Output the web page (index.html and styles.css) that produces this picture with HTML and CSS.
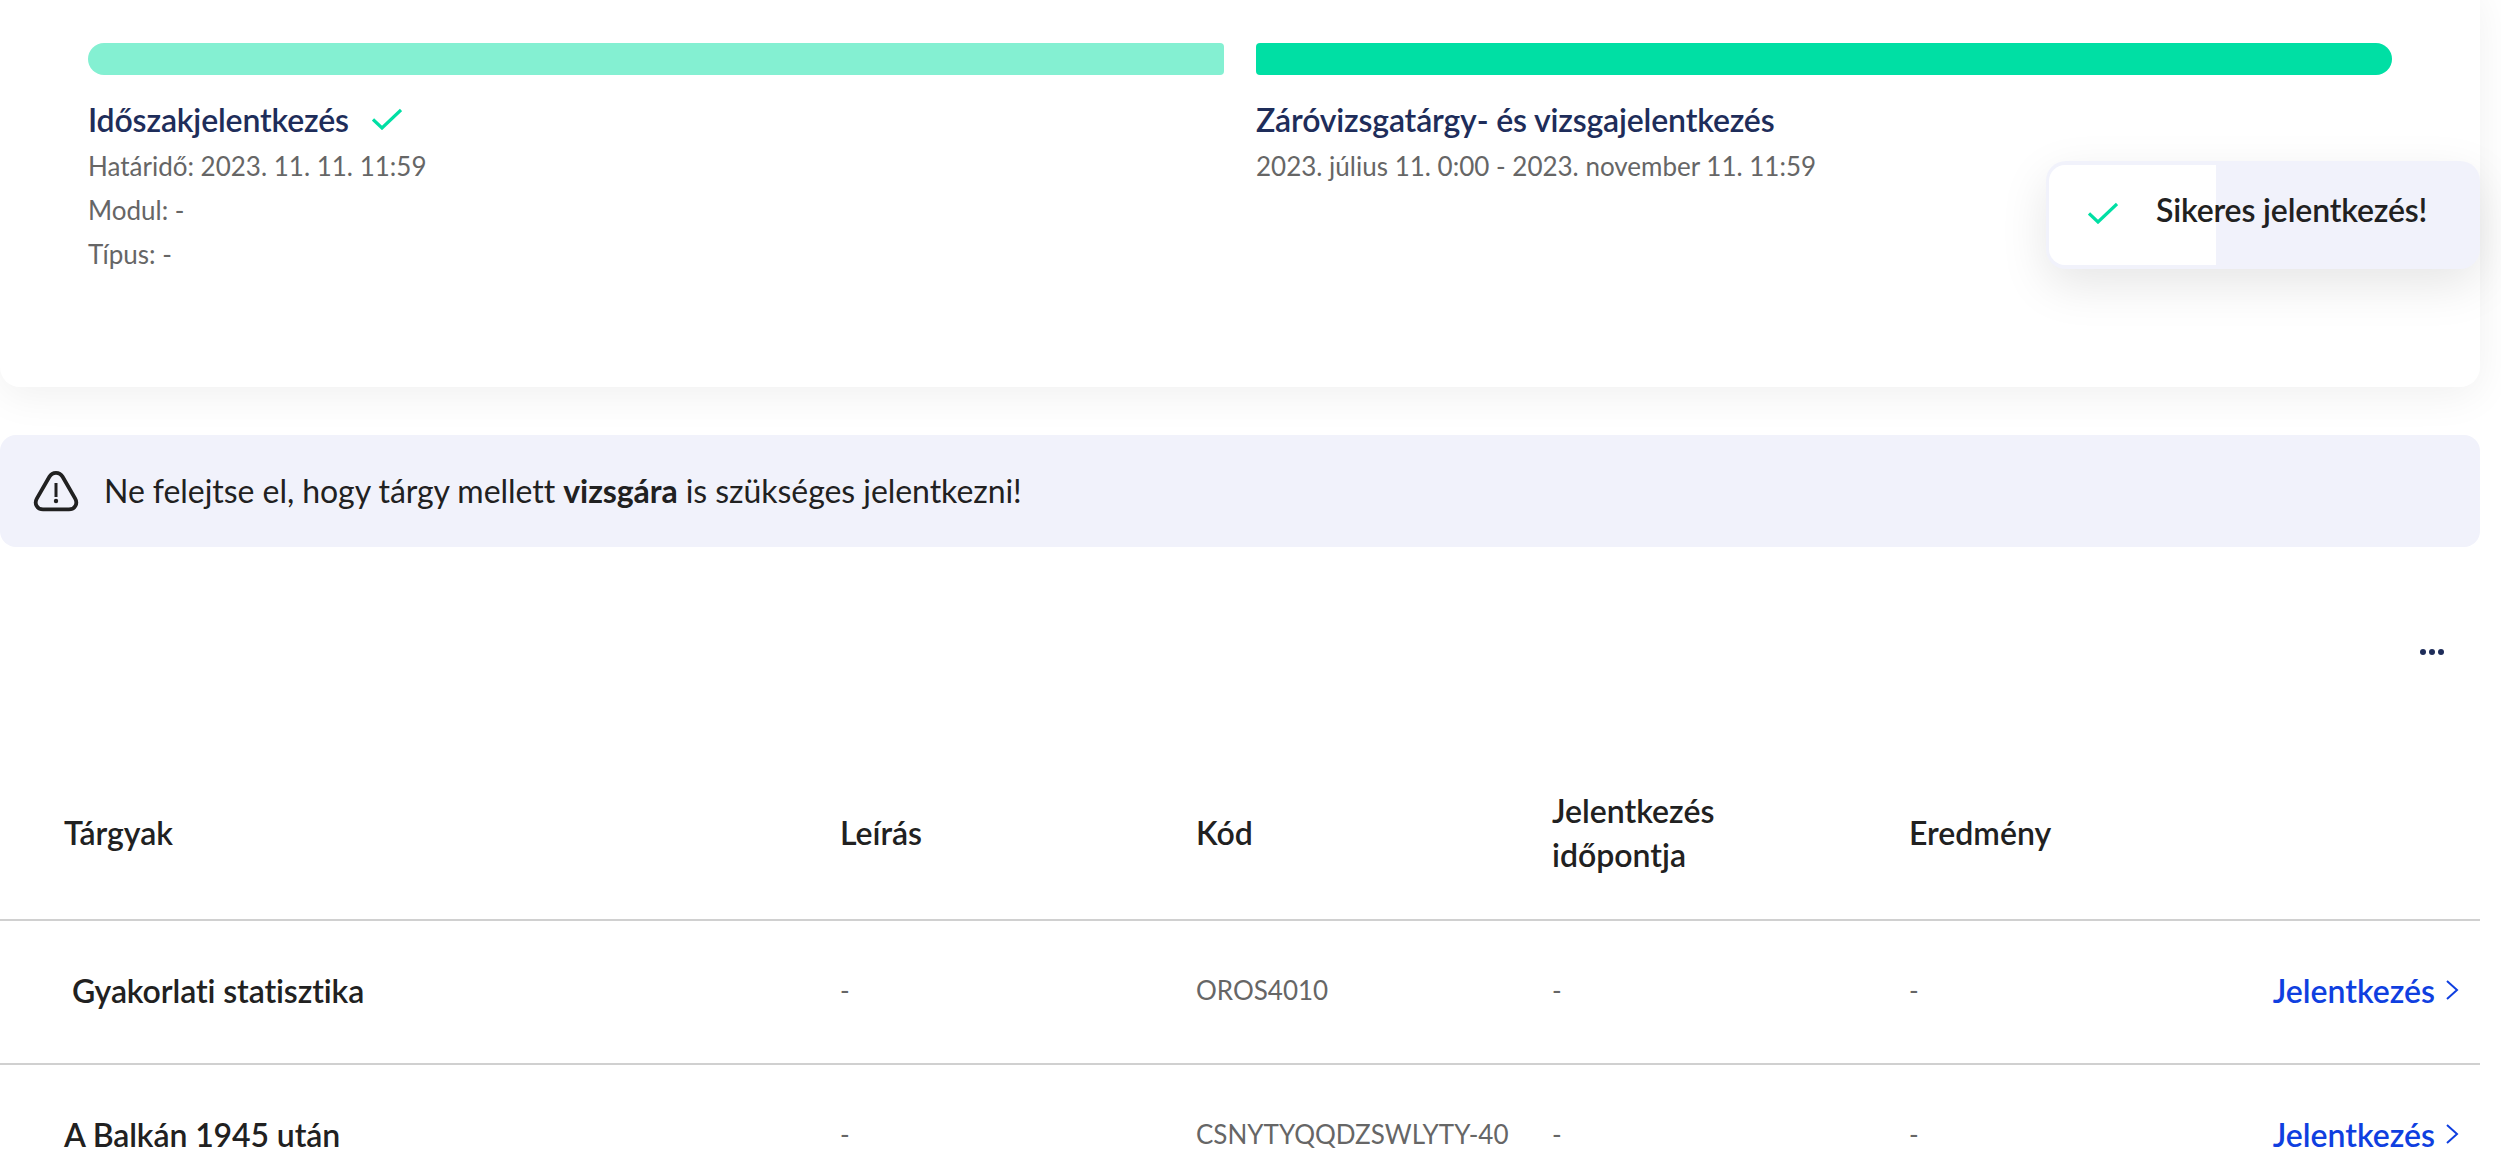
FILE: index.html
```html
<!DOCTYPE html>
<html lang="hu">
<head>
<meta charset="utf-8">
<title>Jelentkezés</title>
<link rel="stylesheet" href="styles.css">
</head>
<body>
<main class="page">
  <section class="card">
    <div class="phases">
      <div class="phase">
        <div class="bar bar-first"></div>
        <h2 class="phase-title">Időszakjelentkezés
          <svg class="title-check" viewBox="0 0 30 22" width="30" height="22" aria-hidden="true"><path d="M1 11.5 10 20 29 2" fill="none" stroke="#00dfa4" stroke-width="3.2"/></svg>
        </h2>
        <p class="phase-line">Határidő: 2023. 11. 11. 11:59</p>
        <p class="phase-line">Modul: -</p>
        <p class="phase-line">Típus: -</p>
      </div>
      <div class="phase">
        <div class="bar bar-second"></div>
        <h2 class="phase-title">Záróvizsgatárgy- és vizsgajelentkezés</h2>
        <p class="phase-line">2023. július 11. 0:00 - 2023. november 11. 11:59</p>
      </div>
    </div>
    <div class="toast">
      <div class="toast-white"></div>
      <svg class="toast-check" viewBox="0 0 30 22" width="30" height="22" aria-hidden="true"><path d="M1 11.5 10 20 29 2" fill="none" stroke="#00dfa4" stroke-width="3.2"/></svg>
      <span class="toast-text">Sikeres jelentkezés!</span>
    </div>
  </section>

  <div class="alert">
    <svg class="alert-icon" viewBox="0 0 48 42" width="48" height="42" aria-hidden="true">
      <path d="M24 2.8 C21 2.8 18.8 4.4 17.4 6.8 L4.8 28.6 C2 33.6 5 39.3 11 39.3 H37 C43 39.3 46 33.6 43.2 28.6 L30.6 6.8 C29.2 4.4 27 2.8 24 2.8 Z" fill="none" stroke="#212121" stroke-width="3.8" stroke-linejoin="round"/>
      <path d="M24 13 V27" stroke="#212121" stroke-width="3"/>
      <circle cx="24" cy="31" r="2.2" fill="#212121"/>
    </svg>
    <span>Ne felejtse el, hogy tárgy mellett <strong>vizsgára</strong> is szükséges jelentkezni!</span>
  </div>

  <div class="more"><span class="dot"></span><span class="dot"></span><span class="dot"></span></div>

  <div class="table">
    <div class="row row-head">
      <div class="cell">Tárgyak</div>
      <div class="cell">Leírás</div>
      <div class="cell">Kód</div>
      <div class="cell">Jelentkezés<br>időpontja</div>
      <div class="cell">Eredmény</div>
      <div class="cell"></div>
    </div>
    <div class="row">
      <div class="cell cell-name cell-indent">Gyakorlati statisztika</div>
      <div class="cell cell-muted">-</div>
      <div class="cell cell-muted">OROS4010</div>
      <div class="cell cell-muted">-</div>
      <div class="cell cell-muted">-</div>
      <a class="cell cell-action" href="#">Jelentkezés
        <svg class="chevron" viewBox="0 0 14 22" width="14" height="22" aria-hidden="true"><path d="M2 2 12 11 2 20" fill="none" stroke="#0f3fe0" stroke-width="2"/></svg>
      </a>
    </div>
    <div class="row">
      <div class="cell cell-name">A Balkán 1945 után</div>
      <div class="cell cell-muted">-</div>
      <div class="cell cell-muted">CSNYTYQQDZSWLYTY-40</div>
      <div class="cell cell-muted">-</div>
      <div class="cell cell-muted">-</div>
      <a class="cell cell-action" href="#">Jelentkezés
        <svg class="chevron" viewBox="0 0 14 22" width="14" height="22" aria-hidden="true"><path d="M2 2 12 11 2 20" fill="none" stroke="#0f3fe0" stroke-width="2"/></svg>
      </a>
    </div>
  </div>
</main>
</body>
</html>
```
FILE: styles.css
```css
* { box-sizing: border-box; }
html, body { margin: 0; height: 100%; overflow: hidden; background: #fff; }
body { font-family: Lato, "Noto Sans", sans-serif; color: #212121; }
.page { width: 2480px; }

.card {
  position: relative;
  height: 404px;
  margin-top: -17px;
  padding: 60px 88px 0;
  background: #fff;
  border-radius: 20px;
  box-shadow: 0 10px 40px rgba(0,0,0,.06);
}
.phases { display: flex; gap: 32px; }
.phase { flex: 1; }
.bar { height: 32px; }
.bar-first { background: #84f0d2; border-radius: 16px 4px 4px 16px; }
.bar-second { background: #00dfa4; border-radius: 4px 16px 16px 4px; }
.phase-title {
  display: flex; align-items: center; gap: 23px;
  margin: 26px 0 9px;
  height: 38px;
  font-size: 32px; font-weight: 600; line-height: 38px;
  letter-spacing: -0.15px;
  color: #1e2d5a;
}
.title-check { flex: none; margin-bottom: 3px; }
.phase-line { margin: 0; height: 44px; font-size: 26px; line-height: 36px; color: #666; }

.toast {
  position: absolute; left: 2046px; top: 178px;
  display: flex; align-items: center;
  width: 434px; height: 108px;
  padding: 0 0 8px 42px;
  background: #f1f2fb;
  border-radius: 20px;
  box-shadow: 0 16px 48px rgba(0,0,0,.1);
}
.toast-white {
  position: absolute; left: 3px; top: 4px;
  width: 167px; height: 100px;
  background: #fff;
  border-radius: 16px 0 0 16px;
}
.toast-check { position: relative; flex: none; margin-top: 4px; }
.toast-text { position: relative; margin: 0 0 2px 38px; font-size: 32px; font-weight: 600; line-height: 40px; letter-spacing: -0.15px; color: #212121; white-space: nowrap; }

.alert {
  display: flex; align-items: center; gap: 24px;
  height: 112px;
  margin-top: 48px;
  padding: 0 0 0 32px;
  background: #f1f2fb;
  border-radius: 16px;
  font-size: 32px; line-height: 40px;
  letter-spacing: -0.05px;
}
.alert strong { font-weight: 700; }
.alert-icon { flex: none; }

.more { display: flex; justify-content: flex-end; gap: 3px; height: 24px; padding: 0 36px 0 0; margin-top: 102px; }
.dot { width: 6px; height: 6px; border-radius: 50%; background: #1e2d5a; }

.table { margin-top: 74px; }
.row {
  display: grid;
  grid-template-columns: 776px 356px 356px 357px 360px 1fr;
  align-items: center;
  height: 144px;
  padding: 0 0 4px 64px;
  border-bottom: 2px solid #d0d0d0;
}
.row-head { height: 174px; padding-bottom: 0; font-size: 32px; font-weight: 600; line-height: 44px; }
.cell-name { font-size: 32px; font-weight: 600; letter-spacing: -0.1px; }
.cell-indent { padding-left: 8px; }
.cell-muted { font-size: 26px; color: #666; }
.cell-action {
  display: flex; align-items: center; justify-content: flex-end; gap: 10px;
  padding-right: 21px;
  font-size: 32px; font-weight: 600; color: #0f3fe0;
  text-decoration: none; white-space: nowrap;
}
.chevron { flex: none; }
```
